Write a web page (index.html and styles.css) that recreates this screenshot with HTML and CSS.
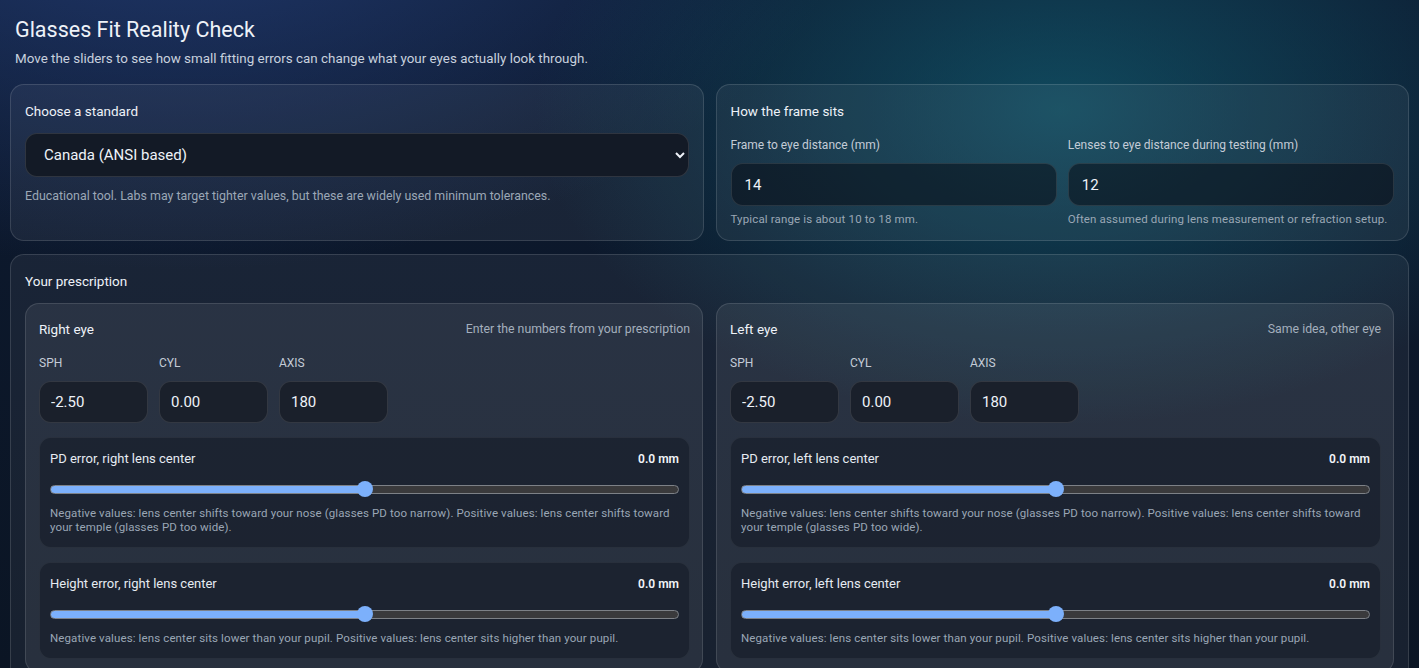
FILE: index.html
```html
<!DOCTYPE html>
<html lang="en">
<head>
<meta charset="utf-8">
<title>Glasses Fit Reality Check</title>
<link rel="stylesheet" href="styles.css">
</head>
<body>
<div class="page">
  <header class="header">
    <h1 class="title">Glasses Fit Reality Check</h1>
    <p class="subtitle">Move the sliders to see how small fitting errors can change what your eyes actually look through.</p>
  </header>

  <div class="top-grid">
    <section class="card">
      <h2 class="card-title">Choose a standard</h2>
      <select class="select">
        <option>Canada (ANSI based)</option>
        <option>United States (ANSI Z80.1)</option>
        <option>Europe (ISO 21987)</option>
      </select>
      <p class="note">Educational tool. Labs may target tighter values, but these are widely used minimum tolerances.</p>
    </section>

    <section class="card">
      <h2 class="card-title">How the frame sits</h2>
      <div class="two-col">
        <div class="field">
          <label class="label">Frame to eye distance (mm)</label>
          <input class="input input-lg" type="text" value="14">
          <p class="help">Typical range is about 10 to 18 mm.</p>
        </div>
        <div class="field">
          <label class="label">Lenses to eye distance during testing (mm)</label>
          <input class="input input-lg" type="text" value="12">
          <p class="help">Often assumed during lens measurement or refraction setup.</p>
        </div>
      </div>
    </section>
  </div>

  <section class="card rx-card">
    <h2 class="card-title">Your prescription</h2>
    <div class="eyes">
      <div class="eye">
        <div class="eye-head">
          <span class="eye-title">Right eye</span>
          <span class="eye-hint">Enter the numbers from your prescription</span>
        </div>
        <div class="rx-row">
          <div class="rx-field"><label class="label">SPH</label><input class="input input-sm" type="text" value="-2.50"></div>
          <div class="rx-field"><label class="label">CYL</label><input class="input input-sm" type="text" value="0.00"></div>
          <div class="rx-field"><label class="label">AXIS</label><input class="input input-sm" type="text" value="180"></div>
        </div>
        <div class="slider-box">
          <div class="slider-head"><span>PD error, right lens center</span><span class="val">0.0 mm</span></div>
          <input class="range" type="range" min="-5" max="5" step="0.1" value="0" style="--pct: 50%">
          <p class="desc">Negative values: lens center shifts toward your nose (glasses PD too narrow). Positive values: lens center shifts toward your temple (glasses PD too wide).</p>
        </div>
        <div class="slider-box">
          <div class="slider-head"><span>Height error, right lens center</span><span class="val">0.0 mm</span></div>
          <input class="range" type="range" min="-5" max="5" step="0.1" value="0" style="--pct: 50%">
          <p class="desc">Negative values: lens center sits lower than your pupil. Positive values: lens center sits higher than your pupil.</p>
        </div>
      </div>

      <div class="eye">
        <div class="eye-head">
          <span class="eye-title">Left eye</span>
          <span class="eye-hint">Same idea, other eye</span>
        </div>
        <div class="rx-row">
          <div class="rx-field"><label class="label">SPH</label><input class="input input-sm" type="text" value="-2.50"></div>
          <div class="rx-field"><label class="label">CYL</label><input class="input input-sm" type="text" value="0.00"></div>
          <div class="rx-field"><label class="label">AXIS</label><input class="input input-sm" type="text" value="180"></div>
        </div>
        <div class="slider-box">
          <div class="slider-head"><span>PD error, left lens center</span><span class="val">0.0 mm</span></div>
          <input class="range" type="range" min="-5" max="5" step="0.1" value="0" style="--pct: 50%">
          <p class="desc">Negative values: lens center shifts toward your nose (glasses PD too narrow). Positive values: lens center shifts toward your temple (glasses PD too wide).</p>
        </div>
        <div class="slider-box">
          <div class="slider-head"><span>Height error, left lens center</span><span class="val">0.0 mm</span></div>
          <input class="range" type="range" min="-5" max="5" step="0.1" value="0" style="--pct: 50%">
          <p class="desc">Negative values: lens center sits lower than your pupil. Positive values: lens center sits higher than your pupil.</p>
        </div>
      </div>
    </div>
  </section>
</div>
</body>
</html>
```

FILE: styles.css
```css
* { box-sizing: border-box; }

html, body {
  margin: 0;
  padding: 0;
}

body {
  font-family: Roboto, "Liberation Sans", sans-serif;
  color: #e6ebf2;
  color-scheme: dark;
  min-height: 100vh;
  background:
    radial-gradient(700px 420px at 1060px 110px, rgba(18, 102, 122, 0.62), rgba(18, 102, 122, 0) 75%),
    radial-gradient(900px 520px at 180px -120px, rgba(44, 74, 145, 0.65), rgba(44, 74, 145, 0) 75%),
    linear-gradient(180deg, #0d1a30 0%, #0b1524 100%);
  background-attachment: fixed;
}

.page {
  padding: 16px 10px 20px;
}

.header {
  padding: 0 5px;
}

.title {
  margin: 0;
  font-size: 21.5px;
  line-height: 28px;
  font-weight: 400;
  color: #eef2f8;
}

.subtitle {
  margin: 6px 0 0;
  font-size: 13.4px;
  line-height: 18px;
  color: #c8d1de;
}

.top-grid {
  margin-top: 16px;
  display: grid;
  grid-template-columns: 1fr 1fr;
  gap: 12px;
}

.card {
  background: rgba(255, 255, 255, 0.055);
  border: 1px solid rgba(255, 255, 255, 0.13);
  border-radius: 14px;
  padding: 16px 14px 14px;
}

.card-title {
  margin: 0;
  font-size: 13.5px;
  line-height: 20px;
  font-weight: 400;
  color: #eef2f8;
}

.select {
  display: block;
  width: 100%;
  height: 44px;
  margin-top: 12px;
  padding: 0 12px 0 14px;
  font-family: inherit;
  font-size: 15px;
  color: #eef2f8;
  background-color: #131a26;
  border: 1px solid rgba(255, 255, 255, 0.12);
  border-radius: 12px;
}

.note {
  margin: 11px 0 0;
  font-size: 12.4px;
  line-height: 16px;
  color: #9ba7b6;
}

.two-col {
  margin-top: 16px;
  display: grid;
  grid-template-columns: 1fr 1fr;
  gap: 11px;
}

.field {
  display: flex;
  flex-direction: column;
}

.label {
  font-size: 12px;
  line-height: 16px;
  color: #c4ccd7;
}

.input {
  font-family: inherit;
  color: #eef2f8;
  background: rgba(8, 13, 22, 0.55);
  border: 1px solid rgba(255, 255, 255, 0.11);
  border-radius: 12px;
  outline: none;
}

.input-lg {
  margin-top: 10px;
  height: 43px;
  width: 100%;
  padding: 0 13px;
  font-size: 15px;
}

.help {
  margin: 6px 0 0;
  font-size: 11.5px;
  line-height: 14px;
  letter-spacing: 0.15px;
  color: #9aa7b5;
}

.rx-card {
  margin-top: 13px;
  padding-bottom: 12px;
}

.eyes {
  margin-top: 12px;
  display: grid;
  grid-template-columns: 1fr 1fr;
  gap: 13px;
}

.eye {
  background: rgba(255, 255, 255, 0.07);
  border: 1px solid rgba(255, 255, 255, 0.12);
  border-radius: 14px;
  padding: 14px 12px 13px 13px;
}

.eye-head {
  display: flex;
  justify-content: space-between;
  align-items: center;
  height: 22px;
}

.eye-title {
  font-size: 13.5px;
  font-weight: 400;
  color: #eef2f8;
}

.eye-hint {
  font-size: 12.3px;
  color: #a4afbd;
}

.rx-row {
  margin-top: 15px;
  display: flex;
  gap: 11px;
}

.rx-field {
  display: flex;
  flex-direction: column;
  width: 109px;
}

.input-sm {
  margin-top: 10px;
  height: 42px;
  width: 109px;
  padding: 0 11px;
  font-size: 15px;
  background: #1a202b;
}

.slider-box {
  margin-top: 14px;
  background: rgba(14, 20, 32, 0.45);
  border: 1px solid rgba(255, 255, 255, 0.06);
  border-radius: 12px;
  padding: 12px 10px 13px 10px;
}

.slider-head {
  display: flex;
  justify-content: space-between;
  align-items: center;
  font-size: 13px;
  line-height: 18px;
  color: #e6ebf2;
}

.val {
  font-size: 12px;
  font-weight: 600;
  color: #f2f5f9;
}

.range {
  -webkit-appearance: none;
  appearance: none;
  display: block;
  width: 100%;
  margin: 13px 0 0;
  height: 16px;
  background: transparent;
}

.range::-webkit-slider-runnable-track {
  box-sizing: border-box;
  height: 9px;
  border-radius: 5px;
  border: 1px solid #7d8187;
  background: linear-gradient(to right, #7cb0fb var(--pct), #3a3a3c var(--pct));
}

.range::-webkit-slider-thumb {
  -webkit-appearance: none;
  appearance: none;
  width: 16px;
  height: 16px;
  margin-top: -4.5px;
  border: none;
  border-radius: 50%;
  background: #7cb0fb;
}

.desc {
  margin: 9px 0 0;
  font-size: 11.5px;
  line-height: 14px;
  letter-spacing: 0.12px;
  color: #9aa6b5;
}
```
